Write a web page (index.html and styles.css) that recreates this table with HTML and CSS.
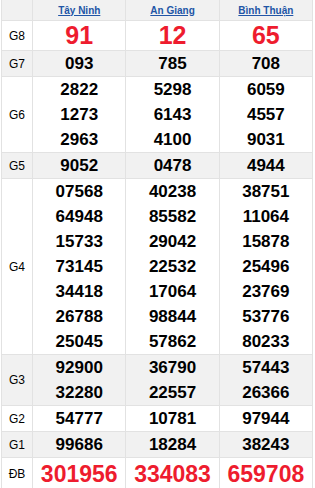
FILE: index.html
```html
<!DOCTYPE html>
<html>
<head>
<meta charset="utf-8">
<link rel="stylesheet" href="styles.css">
</head>
<body>
<table class="kq">
  <colgroup>
    <col class="c-lbl"><col class="c-prov"><col class="c-prov"><col class="c-prov">
  </colgroup>
  <tr class="head">
    <th></th>
    <th><a href="#">Tây Ninh</a></th>
    <th><a href="#">An Giang</a></th>
    <th><a href="#">Bình Thuận</a></th>
  </tr>
  <tr class="g8">
    <td class="lbl">G8</td>
    <td class="big">91</td><td class="big">12</td><td class="big">65</td>
  </tr>
  <tr class="alt">
    <td class="lbl">G7</td>
    <td class="num"><div>093</div></td><td class="num"><div>785</div></td><td class="num"><div>708</div></td>
  </tr>
  <tr>
    <td class="lbl">G6</td>
    <td class="num"><div>2822</div><div>1273</div><div>2963</div></td>
    <td class="num"><div>5298</div><div>6143</div><div>4100</div></td>
    <td class="num"><div>6059</div><div>4557</div><div>9031</div></td>
  </tr>
  <tr class="alt">
    <td class="lbl">G5</td>
    <td class="num"><div>9052</div></td><td class="num"><div>0478</div></td><td class="num"><div>4944</div></td>
  </tr>
  <tr>
    <td class="lbl">G4</td>
    <td class="num"><div>07568</div><div>64948</div><div>15733</div><div>73145</div><div>34418</div><div>26788</div><div>25045</div></td>
    <td class="num"><div>40238</div><div>85582</div><div>29042</div><div>22532</div><div>17064</div><div>98844</div><div>57862</div></td>
    <td class="num"><div>38751</div><div>11064</div><div>15878</div><div>25496</div><div>23769</div><div>53776</div><div>80233</div></td>
  </tr>
  <tr class="alt">
    <td class="lbl">G3</td>
    <td class="num"><div>92900</div><div>32280</div></td>
    <td class="num"><div>36790</div><div>22557</div></td>
    <td class="num"><div>57443</div><div>26366</div></td>
  </tr>
  <tr>
    <td class="lbl">G2</td>
    <td class="num"><div>54777</div></td><td class="num"><div>10781</div></td><td class="num"><div>97944</div></td>
  </tr>
  <tr class="alt">
    <td class="lbl">G1</td>
    <td class="num"><div>99686</div></td><td class="num"><div>18284</div></td><td class="num"><div>38243</div></td>
  </tr>
  <tr class="db">
    <td class="lbl">ĐB</td>
    <td class="big">301956</td><td class="big">334083</td><td class="big">659708</td>
  </tr>
</table>
</body>
</html>
```
FILE: styles.css
```css
html, body {
  margin: 0;
  padding: 0;
  background: #ffffff;
}
body {
  padding-left: 1px;
  font-family: "Liberation Sans", Arial, sans-serif;
  color: #000;
}
.kq {
  border-collapse: collapse;
  table-layout: fixed;
  width: 312px;
}
.c-lbl { width: 31px; }
.c-prov { width: 93px; }
.kq th, .kq td {
  border: 1px solid #e2e2e2;
  padding: 0;
  text-align: center;
  vertical-align: middle;
}
.head th {
  background: #f1f1f1;
  height: 20px;
  border-top: none;
  font-size: 10px;
  font-weight: bold;
}
.head a {
  color: #2155a6;
  text-decoration: underline;
}
.lbl {
  font-size: 12px;
}
.alt td {
  background: #f1f1f1;
}
.num {
  font-size: 17px;
  font-weight: bold;
}
.num div {
  line-height: 25px;
}
.g8 td {
  height: 28px;
}
.g8 .big {
  font-size: 25px;
  font-weight: bold;
  color: #ee1c2e;
}
.db td {
  height: 32px;
}
.db .big {
  font-size: 23px;
  font-weight: bold;
  color: #ee1c2e;
}
```
